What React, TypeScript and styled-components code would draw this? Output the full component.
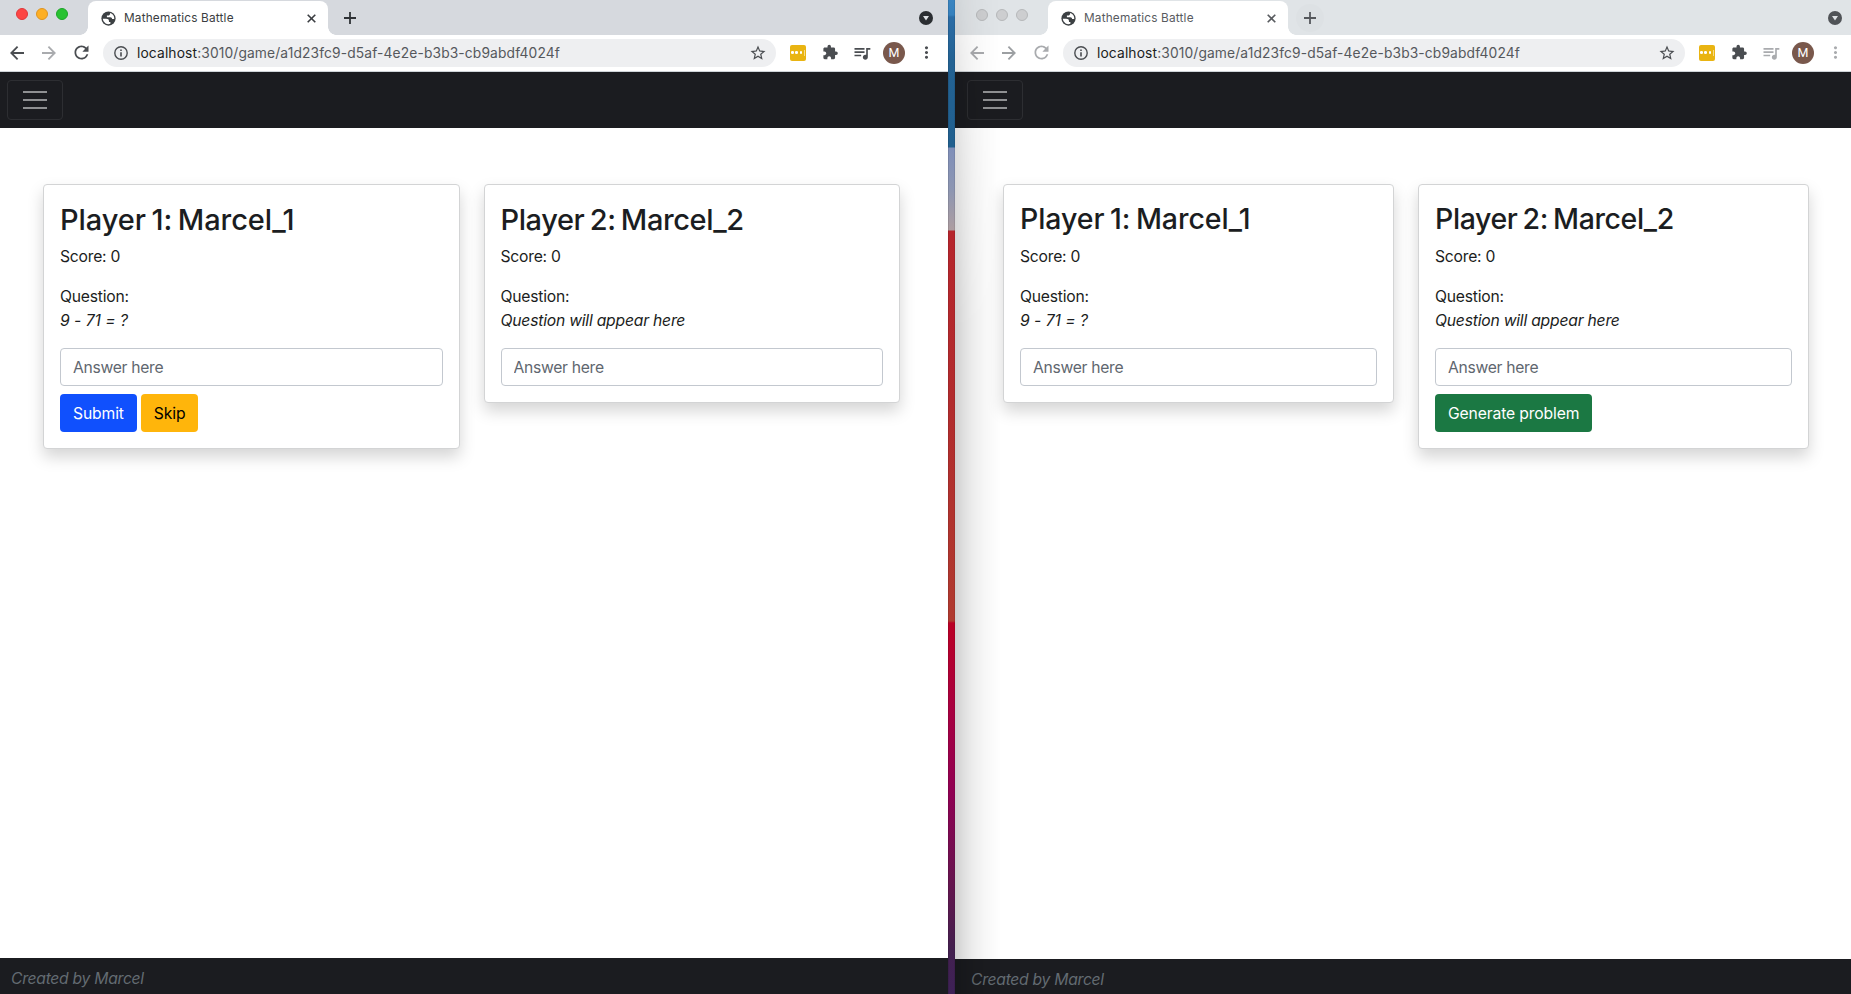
import React from "react";
import styled, { createGlobalStyle } from "styled-components";
import { MdExtension, MdMoreVert, MdQueueMusic, MdRefresh, MdStarBorder } from "react-icons/md";

const GlobalStyle = createGlobalStyle`
  *, *::before, *::after { box-sizing: border-box; }
  body {
    margin: 0;
    overflow: hidden;
    font-family: Inter, "Liberation Sans", sans-serif;
    font-size: 15.7px;
    line-height: 24px;
    letter-spacing: -0.22px;
    color: #1b1d21;
  }
`;

const Desktop = styled.main`
  display: grid;
  grid-template-columns: 953px 7px 902px;
  width: 1862px;
  height: 994px;
  margin-left: -5px;
  overflow: hidden;
`;

const Wallpaper = styled.div`
  background:
    linear-gradient(90deg, rgba(0, 0, 0, 0.1) 1px, transparent 1px, transparent 6px, rgba(0, 0, 0, 0.08) 6px),
    linear-gradient(
      180deg,
      #3a84c0 0,
      #3580bd 15px,
      #2a6ca6 17px,
      #236293 60px,
      #21608f 147px,
      #7f8fb9 148px,
      #8d96b2 190px,
      #ad9da0 230px,
      #b6252c 231px,
      #b22b2d 400px,
      #b03a2f 621px,
      #ba0025 623px,
      #a80040 710px,
      #8f0053 795px,
      #67144f 880px,
      #43204f 950px,
      #3e2157 994px
    );
`;

const WindowFrame = styled.section`
  position: relative;
  display: flex;
  flex-direction: column;
  min-width: 0;
  height: 994px;
  background: #fff;
`;

const EdgeShade = styled.div`
  position: absolute;
  top: 0;
  bottom: 0;
  left: 0;
  width: 46px;
  pointer-events: none;
  background: linear-gradient(
    90deg,
    rgba(0, 0, 0, 0.19) 0,
    rgba(0, 0, 0, 0.13) 8px,
    rgba(0, 0, 0, 0.07) 18px,
    rgba(0, 0, 0, 0.03) 30px,
    transparent 46px
  );
  mask-image: linear-gradient(180deg, rgba(0, 0, 0, 0.35) 0, rgba(0, 0, 0, 0.6) 100px, #000 330px);
`;

const TabStrip = styled.div<{ $active: boolean }>`
  display: flex;
  height: 35px;
  padding-left: 21px;
  padding-right: 15px;
  background: ${(p) => (p.$active ? "#d6d9de" : "#e0e4e7")};
`;

const TrafficLights = styled.div<{ $active: boolean }>`
  display: flex;
  gap: 8px;
  width: 72px;
  padding-top: ${(p) => (p.$active ? 8 : 8.5)}px;
`;

const Light = styled.span<{ $fill: string; $edge: string }>`
  width: 12px;
  height: 12px;
  border-radius: 50%;
  background: ${(p) => p.$fill};
  border: 1px solid ${(p) => p.$edge};
`;

const Tab = styled.div<{ $active: boolean }>`
  position: relative;
  display: flex;
  align-items: center;
  width: 240px;
  height: 34px;
  margin-top: 1px;
  padding: 0 12px 0 12.5px;
  border-radius: 8px 8px 0 0;
  background: #fff;
  color: ${(p) => (p.$active ? "#3a3d41" : "#585b5f")};

  &::before,
  &::after {
    content: "";
    position: absolute;
    bottom: 0;
    width: 8px;
    height: 8px;
  }
  &::before {
    left: -8px;
    background: radial-gradient(circle at 0 0, transparent 7.5px, #fff 8px);
  }
  &::after {
    right: -8px;
    background: radial-gradient(circle at 100% 0, transparent 7.5px, #fff 8px);
  }
`;

const TabTitle = styled.span`
  flex: 1;
  margin-left: 8.5px;
  font-size: 11.8px;
  letter-spacing: 0.18px;
  line-height: 16px;
`;

const NewTab = styled.div<{ $active: boolean }>`
  display: flex;
  align-items: center;
  justify-content: center;
  width: 28px;
  height: 28px;
  margin: 4px auto 0 8px;
  border-radius: 50%;
  background: ${(p) => (p.$active ? "transparent" : "#dde1e4")};
  color: ${(p) => (p.$active ? "#2f3236" : "#55585c")};
`;

const TabSearch = styled.div`
  display: flex;
  padding-top: 11px;
`;

const Toolbar = styled.div`
  display: flex;
  align-items: center;
  height: 37px;
  padding: 0 6px 1px;
  border-bottom: 1px solid #cfd4d8;
`;

const ToolCell = styled.div<{ $color: string }>`
  display: flex;
  align-items: center;
  justify-content: center;
  width: 32px;
  height: 32px;
  color: ${(p) => p.$color};
`;

const AddressBar = styled.div`
  display: flex;
  align-items: center;
  flex: 1;
  height: 28px;
  margin: 0 6px;
  padding: 0 9px 0 11px;
  border-radius: 14px;
  background: #eeeff1;
  color: #4a4d51;
`;

const Url = styled.span`
  flex: 1;
  margin-left: 9px;
  font-size: 13.8px;
  letter-spacing: 0.13px;
  line-height: 20px;
  white-space: nowrap;
  color: #55585c;
`;

const Host = styled.span`
  color: #1b1d21;
`;

const Extension = styled.span`
  display: flex;
  align-items: center;
  justify-content: center;
  gap: 1.5px;
  width: 16px;
  height: 16px;
  border-radius: 2px;
  background: #e9b412;
`;

const Dot = styled.i`
  width: 2.6px;
  height: 2.6px;
  border-radius: 50%;
  background: #fff;
`;

const Caret = styled.i`
  width: 1px;
  height: 6px;
  background: #f6dc8a;
`;

const Avatar = styled.span`
  display: flex;
  align-items: center;
  justify-content: center;
  width: 22px;
  height: 22px;
  border-radius: 50%;
  background: #79584c;
  color: #fff;
  font: 400 12.5px/22px Roboto, sans-serif;
  letter-spacing: 0;
`;

const Navbar = styled.nav`
  height: 56px;
  padding: 8px 12px;
  background: #1b1c20;
`;

const Toggler = styled.div`
  display: flex;
  flex-direction: column;
  align-items: center;
  justify-content: center;
  gap: 6px;
  width: 56px;
  height: 40px;
  border: 1px solid #2d2e32;
  border-radius: 4px;
`;

const TogglerLine = styled.span`
  width: 24px;
  height: 2px;
  background: #8f9092;
`;

const Board = styled.div`
  display: grid;
  grid-template-columns: 1fr 1fr;
  align-items: start;
  gap: 24px;
  flex: 1;
  padding: 56px 48px 0;
`;

const Card = styled.article`
  padding: 16px;
  border: 1px solid #d3d4d5;
  border-radius: 4px;
  background: #fff;
  box-shadow: 0 8px 16px rgba(0, 0, 0, 0.17);
`;

const PlayerName = styled.h2<{ $size: number; $leading: number; $tracking: number }>`
  height: 35px;
  margin: 0 0 9px;
  font-size: ${(p) => p.$size}px;
  font-weight: 500;
  line-height: ${(p) => p.$leading}px;
  letter-spacing: ${(p) => p.$tracking}px;
  word-spacing: -2px;
  white-space: nowrap;
`;

const Paragraph = styled.p<{ $gap?: number }>`
  margin: 0 0 ${(p) => p.$gap ?? 16}px;
`;

const Question = styled.em<{ $numeric: boolean }>`
  display: block;
  letter-spacing: ${(p) => (p.$numeric ? -0.03 : -0.22)}px;
`;

const AnswerInput = styled.input`
  display: block;
  width: 100%;
  height: 38px;
  padding: 0 12px;
  border: 1px solid #c3c8cf;
  border-radius: 4px;
  background: #fff;
  font: inherit;
  letter-spacing: -0.3px;

  &::placeholder {
    color: #5f676f;
    opacity: 1;
  }
`;

const Actions = styled.div`
  display: flex;
  gap: 4px;
  margin-top: 8px;
`;

const buttonTones = {
  primary: { bg: "#1050fd", fg: "#fff" },
  warning: { bg: "#ffb50b", fg: "#000" },
  success: { bg: "#1b7843", fg: "#fff" },
};
type Tone = keyof typeof buttonTones;

const ActionButton = styled.button<{ $tone: Tone }>`
  height: 38px;
  padding: 1px 13px 0;
  border: 0;
  border-radius: 4px;
  background: ${(p) => buttonTones[p.$tone].bg};
  color: ${(p) => buttonTones[p.$tone].fg};
  font: inherit;
  letter-spacing: -0.13px;
  white-space: nowrap;
`;

const Footer = styled.footer<{ $height: number }>`
  height: ${(p) => p.$height}px;
  padding: 9px 16px 0;
  background: #1b1c20;
  color: #636b72;
  font-style: italic;
  letter-spacing: -0.28px;
`;

const GlobeIcon = () => (
  <svg width="15" height="15" viewBox="0 0 16 16">
    <circle cx="8" cy="8" r="7.6" fill="#3c4043" />
    <path
      fill="#fff"
      d="M1.9 8.2h3.6c2 0 3 .9 3 2.4v1.1H10v2a6.1 6.1 0 0 1-8.1-5.5zM9.6 2.1v.9c0 1.2-.8 1.9-2 1.9H6.3v1.7h3.6c1.2 0 1.9.8 1.9 1.9h2.3A6.1 6.1 0 0 0 9.6 2.1z"
    />
  </svg>
);

const InfoIcon = () => (
  <svg width="14" height="14" viewBox="0 0 14 14">
    <circle cx="7" cy="7" r="6.2" fill="none" stroke="currentColor" strokeWidth="1.4" />
    <path d="M6.2 6.2h1.6v4.2H6.2zM6.2 3.5h1.6v1.6H6.2z" fill="currentColor" />
  </svg>
);

const StrokeIcon = ({ size, width, d }: { size: number; width: number; d: string }) => (
  <svg width={size} height={size} viewBox={`0 0 ${size} ${size}`}>
    <path d={d} fill="none" stroke="currentColor" strokeWidth={width} />
  </svg>
);

const TabSearchIcon = ({ color }: { color: string }) => (
  <svg width="14" height="14" viewBox="0 0 14 14">
    <circle cx="7" cy="7" r="7" fill={color} />
    <path d="M4 5h6L7 9.4z" fill="#dfe2e6" />
  </svg>
);

interface Player {
  name: string;
  tracking: number;
  question: string;
  numeric?: boolean;
  actions: { label: string; tone: Tone }[];
}

interface BrowserProps {
  active: boolean;
  footerHeight: number;
  nameSize: number;
  nameLeading: number;
  players: Player[];
}

const activeLights = [
  ["#fd4644", "#e0383a"],
  ["#fdaf24", "#df9420"],
  ["#28c231", "#1da528"],
];
const idleLights = Array(3).fill(["#cdced0", "#b6b8ba"]);

function BrowserWindow({ active, footerHeight, nameSize, nameLeading, players }: BrowserProps) {
  const strong = "#4a4d51";
  const muted = "#a9abae";
  const control = active ? strong : muted;

  return (
    <WindowFrame>
      <TabStrip $active={active}>
        <TrafficLights $active={active}>
          {(active ? activeLights : idleLights).map(([fill, edge], i) => (
            <Light key={i} $fill={fill} $edge={edge} />
          ))}
        </TrafficLights>
        <Tab $active={active}>
          <GlobeIcon />
          <TabTitle>Mathematics Battle</TabTitle>
          <StrokeIcon size={9} width={1.6} d="M.7.7l7.6 7.6M8.3.7L.7 8.3" />
        </Tab>
        <NewTab $active={active}>
          <StrokeIcon size={12} width={1.8} d="M6 0v12M0 6h12" />
        </NewTab>
        <TabSearch>
          <TabSearchIcon color={active ? "#2b2e32" : "#505357"} />
        </TabSearch>
      </TabStrip>
      <Toolbar>
        <ToolCell $color={control}>
          <StrokeIcon size={14} width={1.8} d="M14 7H1.4M7.6.7L1.3 7l6.3 6.3" />
        </ToolCell>
        <ToolCell $color={active ? muted : "#9c9fa2"}>
          <StrokeIcon size={14} width={1.8} d="M0 7h12.6M6.4.7L12.7 7l-6.3 6.3" />
        </ToolCell>
        <ToolCell $color={control}>
          <MdRefresh size={21} />
        </ToolCell>
        <AddressBar>
          <InfoIcon />
          <Url>
            <Host>localhost</Host>:3010/game/a1d23fc9-d5af-4e2e-b3b3-cb9abdf4024f
          </Url>
          <MdStarBorder size={18} />
        </AddressBar>
        <ToolCell $color={strong}>
          <Extension>
            <Dot />
            <Dot />
            <Dot />
            <Caret />
          </Extension>
        </ToolCell>
        <ToolCell $color={strong}>
          <MdExtension size={16.5} />
        </ToolCell>
        <ToolCell $color={control}>
          <MdQueueMusic size={20} />
        </ToolCell>
        <ToolCell $color={control}>
          <Avatar>M</Avatar>
        </ToolCell>
        <ToolCell $color={control}>
          <MdMoreVert size={19} />
        </ToolCell>
      </Toolbar>
      <Navbar>
        <Toggler>
          <TogglerLine />
          <TogglerLine />
          <TogglerLine />
        </Toggler>
      </Navbar>
      <Board>
        {players.map((player) => (
          <Card key={player.name}>
            <PlayerName $size={nameSize} $leading={nameLeading} $tracking={player.tracking}>
              {player.name}
            </PlayerName>
            <Paragraph>Score: 0</Paragraph>
            <Paragraph $gap={15}>
              Question:
              <Question $numeric={!!player.numeric}>{player.question}</Question>
            </Paragraph>
            <AnswerInput placeholder="Answer here" />
            {player.actions.length > 0 && (
              <Actions>
                {player.actions.map((action) => (
                  <ActionButton key={action.label} $tone={action.tone}>
                    {action.label}
                  </ActionButton>
                ))}
              </Actions>
            )}
          </Card>
        ))}
      </Board>
      <Footer $height={footerHeight}>Created by Marcel</Footer>
      {!active && <EdgeShade />}
    </WindowFrame>
  );
}

export default function App() {
  return (
    <>
      <GlobalStyle />
      <Desktop>
        <BrowserWindow
          active
          footerHeight={36}
          nameSize={29}
          nameLeading={38}
          players={[
            {
              name: "Player 1: Marcel_1",
              tracking: -0.08,
              question: "9 - 71 = ?",
              numeric: true,
              actions: [
                { label: "Submit", tone: "primary" },
                { label: "Skip", tone: "warning" },
              ],
            },
            {
              name: "Player 2: Marcel_2",
              tracking: -0.41,
              question: "Question will appear here",
              actions: [],
            },
          ]}
        />
        <Wallpaper />
        <BrowserWindow
          active={false}
          footerHeight={35}
          nameSize={28.5}
          nameLeading={36}
          players={[
            {
              name: "Player 1: Marcel_1",
              tracking: -0.06,
              question: "9 - 71 = ?",
              numeric: true,
              actions: [],
            },
            {
              name: "Player 2: Marcel_2",
              tracking: -0.41,
              question: "Question will appear here",
              actions: [{ label: "Generate problem", tone: "success" }],
            },
          ]}
        />
      </Desktop>
    </>
  );
}
